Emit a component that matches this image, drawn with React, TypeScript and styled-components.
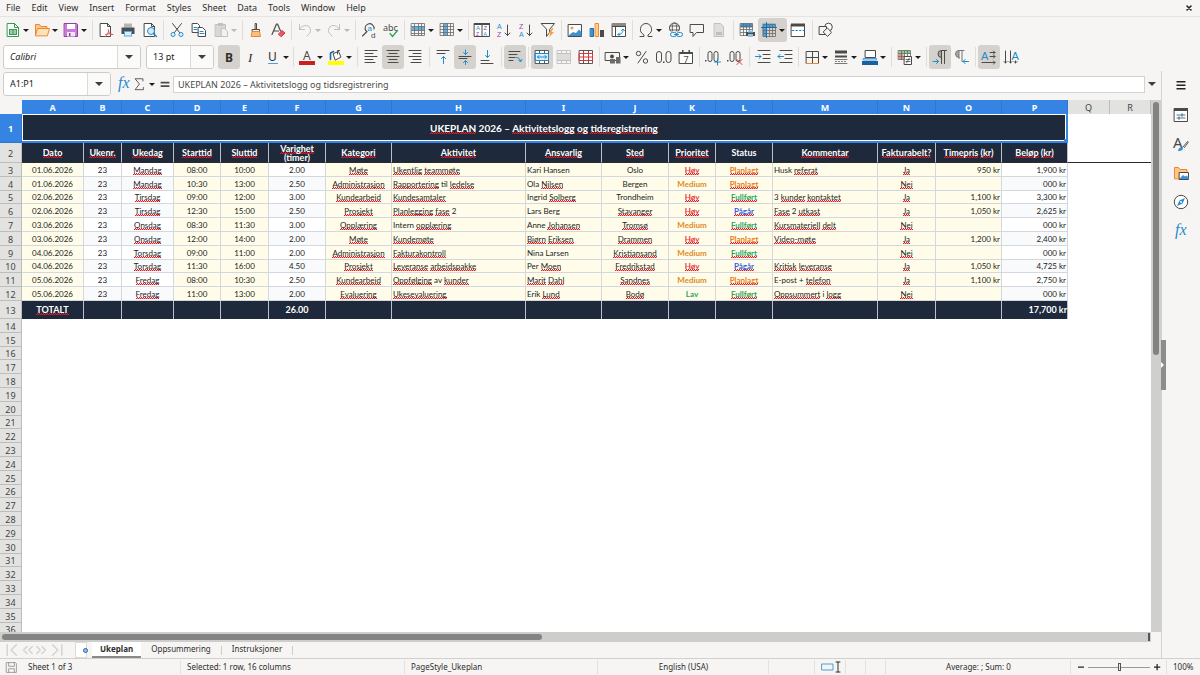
import React, { useEffect, useState } from "react";
import styled, { createGlobalStyle, css } from "styled-components";

const Global = createGlobalStyle`
  *, *::before, *::after { box-sizing: border-box; }
  html, body { margin: 0; height: 100%; overflow: hidden; }
  #root { height: 100%; }
  button, input { font: inherit; color: inherit; margin: 0; padding: 0; border: 0; background: none; }
`;

const ink = "#4a4a48";
const blue = "#1e8bcd";
const soft = "#c0c0be";
const navy = "#1e293b";
const accent = "#3584e4";

/* ---------- icons ---------- */

const grid = (x: number, y: number, w: number, h: number, c: number, r: number) => {
  let d = `M${x} ${y}h${w}v${h}h${-w}z`;
  for (let i = 1; i < c; i++) d += `M${x + (w * i) / c} ${y}v${h}`;
  for (let i = 1; i < r; i++) d += `M${x} ${y + (h * i) / r}h${w}`;
  return d;
};

const S = (d: string, c = ink, w = 1, fill = "none") => (
  <path d={d} stroke={c} strokeWidth={w} fill={fill} strokeLinecap="round" strokeLinejoin="round" />
);
const F = (d: string, c = ink) => <path d={d} fill={c} />;
const T = (x: number, y: number, t: string, size = 8, c = ink, extra: React.SVGProps<SVGTextElement> = {}) => (
  <text x={x} y={y} fontSize={size} fill={c} fontFamily='"Noto Sans", sans-serif' {...extra}>{t}</text>
);
const arial = { fontFamily: '"Liberation Sans", sans-serif' };

const icons: Record<string, React.ReactNode> = {
  new: <>{S("M2.5 1.5h7l4 4v9h-11z", "#2f9e4f", 1, "#fff")}{F("M4 7h8v6H4z", "#3a9a55")}{F("M5 8.500h2.500v1H5zM8.500 8.500H11v1H8.500zM5 10.500h2.500v1H5zM8.500 10.500H11v1H8.500z", "#fff")}{S("M9.500 1.500v4h4", "#2f9e4f")}</>,
  open: <>{S("M1.500 13.500v-11h4l1.500 2h6v2", "#ed8733", 1, "#fbc886")}{S("M1.500 13.500l2-7h12l-2 7z", "#ed8733", 1, "#fde2b8")}</>,
  save: <>{S("M1.500 1.500h12l1 1v12h-13z", "#8f3f9c", 1, "#c77fd4")}{F("M4 2h8v5H4z", "#fff")}{F("M4 10h8v4.500H4z", "#f3e6f6")}{F("M6 11h1.500v3H6z", "#8f3f9c")}</>,
  pdf: <>{S("M2.500 1.500h7l3 3v10h-10z", ink, 1, "#fff")}{S("M9.500 1.500v3h3")}{S("M7.500 14.500c2-2 3-4 3-6.500M10.500 8c0 3 2 5 4.500 4.500M7.500 12.500c2.500-1 5-1 7 0", "#e0555a")}</>,
  print: <>{F("M4 1.500h8v4H4z", "#b6b6b4")}{F("M1.500 5.500h13v6.500h-13z", "#4d4d4b")}{F("M4 9h8v5.500H4z", "#55a8de")}{F("M5 10h6v3.500H5z", "#dceefa")}</>,
  preview: <>{S("M2.500 1.500h7l3 3v10h-10z", ink, 1, "#fff")}{S("M9.500 1.500v3h3")}<circle cx="9" cy="9" r="3.500" fill="#d5eaf8" stroke={blue} />{S("M11.500 11.500l3 3", blue, 1.5)}</>,
  cut: <>{S("M3.500 1.500l7 9M12.500 1.500l-7 9")}<circle cx="4" cy="12.500" r="2" fill="none" stroke={blue} /><circle cx="12" cy="12.500" r="2" fill="none" stroke={blue} /></>,
  copy: <>{S("M1.500 1.500h5l2 2v7h-7z", ink, 1, "#fff")}{S("M7.500 5.500h4l3 3v6h-7z", ink, 1, "#fff")}{S("M9 9.500h3M9 11.500h4M3 5.500h3M3 7.500h3", blue)}</>,
  paste: <>{S("M2.500 2.500h10v12h-10z", soft, 1, "#d8d8d6")}{F("M5 1h5v3H5z", soft)}{S("M8.500 6.500h3l3 3v5h-6z", soft, 1, "#f2f2f0")}</>,
  clone: <>{S("M7.500 1.500h1v6h-1z")}{S("M4.500 7.500h7v2h-7z")}{S("M4.500 9.500h7l1 5h-9z", "#ed8733", 1, "#f9bf7c")}</>,
  clear: <>{S("M2 12.500L6.500 2h1l3 7M3.500 9h5", ink, 1.2)}{S("M8.500 12l3.500-3.500 3 2.500-3.500 3.500z", "#d9363b", 1, "#e8585c")}</>,
  undo: S("M2.500 2.500v5h5M2.500 7.500c3-6 11-5 11 1 0 2-1 3.500-3.500 5.500", soft),
  redo: S("M13.500 2.500v5h-5M13.500 7.500c-3-6-11-5-11 1 0 2 1 3.500 3.500 5.500", soft),
  find: <>{S("M6 9.500L1.500 14M5.500 9.500a4.500 4.500 0 1 1 7.500-2.500", ink, 1.1)}{T(6.5, 9, "a", 8, blue, arial)}{T(10, 15.5, "d", 8, ink, arial)}</>,
  spell: <>{T(0, 8.5, "abc", 9)}{S("M7 11.500l2.500 3 5-6", "#2fa45a", 1.3)}</>,
  rows: <>{F("M1.500 4.500h13v4h-13z", "#5fb0e4")}{S("M1.500 1.500h13v12h-13zM1.500 4.500h13M1.500 8.500h13M1.500 11.500h13M4.500 1.500v12M8.500 1.500v12M11.500 1.500v12", "#6a6a68", 0.8)}</>,
  cols: <>{F("M4.500 1.500h4v12h-4z", "#5fb0e4")}{S("M1.500 1.500h13v12h-13zM1.500 4.500h13M1.500 7.500h13M1.500 10.500h13M4.500 1.500v12M8.500 1.500v12M11.500 1.500v12", "#6a6a68", 0.8)}</>,
  sort: <>{S("M.500 1.500h15v13H.500zM8 1.500v13", ink, 1, "#fff")}{F("M0 1h16v2H0z")}{T(2, 8.2, "A", 6, blue, arial)}{T(2, 14, "Z", 5, "#a33bb5", arial)}{T(9.5, 8.200, "Z", 6, "#a33bb5", arial)}{T(9.5, 14, "A", 5, blue, arial)}</>,
  asc: <>{T(1, 6.5, "A", 7, blue, arial)}{T(1, 15, "Z", 7, "#a33bb5", arial)}{S("M11.500 3v10.500M9 11l2.500 2.500 2.500-2.500")}</>,
  desc: <>{T(1, 6.5, "Z", 7, "#a33bb5", arial)}{T(1, 15, "A", 7, blue, arial)}{S("M11.500 3v10.500M9 11l2.500 2.500 2.500-2.500")}</>,
  filter: <>{S("M1.500 1.500h13l-5 6v3l-3 4v-7z")}{F("M12 6l-4 5.500h2.500L9 15.500l5-5.500h-2.500l2-4z", "#f0a043")}</>,
  image: <>{S("M1.500 2.500h13v12h-13z", ink, 1, "#fff")}<circle cx="5" cy="6" r="1.500" fill="#f0a043" />{F("M2 13l4-3 3 1 3-3.500 2.500 2.500v4H2z", "#3c93cf")}</>,
  chart: <>{S("M1.500 6.500h3v8h-3z", "#1b6ea5", 1, "#3c93cf")}{S("M6.500 1.500h3v13h-3z", "#ed8733", 1, "#fbd49a")}{F("M11 8h4v7h-4z")}</>,
  pivot: <>{S("M1.500 1.500h13v13h-13zM1.500 4.500h13M4.500 1.500v13", ink, 1, "#fff")}{F("M1 1h14v3H1z", "#8a8a88")}{S("M7 12.500c3.500 0 5-1.500 5-5M10.500 8.500L12 7l1.500 1.500M8.500 11L7 12.500 8.500 14", blue)}</>,
  omega: S("M2 14.500h4v-1.500C3 11 2 9 2.500 6.500 3 3.500 5 1.500 8 1.500s5 2 5.500 5C14 9 13 11 10 13v1.500h4"),
  link: <><circle cx="7.500" cy="6" r="5" fill="none" stroke={ink} /><ellipse cx="7.500" cy="6" rx="2.200" ry="5" fill="none" stroke={ink} strokeWidth=".8" />{S("M3 4h9M3 8h9", ink, 0.8)}{F("M3 9.500h13v6H3z", "#f6f5f4")}<rect x="3.500" y="10.500" width="6" height="4" rx="2" fill="none" stroke={blue} /><rect x="9.500" y="10.500" width="6" height="4" rx="2" fill="none" stroke={blue} />{S("M7.500 12.500h4", blue)}</>,
  comment: S("M1.500 2.500h13v8h-7l-3.500 4v-4h-2.500z"),
  header: <>{S("M3.500 1.500h6l3 3v10h-9z", soft, 1, "#dededc")}{F("M5 10h6v3H5z", soft)}</>,
  area: <>{F("M1.500 1.500h12v4h-12z", "#3c93cf")}{S(grid(1.5, 1.500, 12, 12, 4, 4), "#6a6a68", 0.8)}{F("M7 10h9v4H7z", "#4d4d4b")}{F("M9 8.500h5v2H9zM9 12h5v3H9z", "#8fc3e6")}</>,
  freeze: <>{F("M1.500 1.500h13v4h-9v9h-4z", "#4aa0dc")}{S(grid(2.5, 2.500, 12, 12, 4, 4), "#6a6a68", 0.8)}{S("M.500 5.500h15M5.500.500v15", "#1b6ea5")}</>,
  split: <>{S("M1.500 2.500h13v12h-13z", ink, 1, "#fff")}{F("M1 1.500h14v3H1z")}{S("M2 8.500h2M6 8.500h1.500M9.500 8.500h1.500M13 8.500h1", blue)}</>,
  shapes: <><circle cx="10.500" cy="5" r="3.800" fill="#fff" stroke={ink} />{S("M1.500 4.500h7v8h-7z", ink, 1, "#f6f5f4")}{S("M9.500 6l4 4.300-4 4.200-4-4.200z", ink, 1, "#f6f5f4")}</>,
  left: S("M2 1.500h12M2 4.500h8M2 7.500h12M2 10.500h8M2 13.500h10"),
  center: S("M2 1.500h12M4 4.500h8M2 7.500h12M4 10.500h8M3 13.500h10"),
  right: S("M2 1.500h12M6 4.500h8M2 7.500h12M6 10.500h8M4 13.500h10"),
  top: <>{S("M2 1.500h12M2 4.500h8")}{S("M8.500 14.500v-7M6.500 9.500l2-2 2 2", blue)}</>,
  middle: <>{S("M2 7.500h12M2 9.500h8")}{S("M8.500 1v4.500M6.500 3.500l2 2 2-2M8.500 15.500V12M6.500 13.500l2-2 2 2", blue)}</>,
  bottom: <>{S("M2 11.500h8M2 14.500h12")}{S("M8.500 1.500v7M6.500 6.500l2 2 2-2", blue)}</>,
  wrap: <>{S("M2 2.500h11M2 5.500h8M2 8.500h6M2 11.500h4")}{S("M9 8.500c3 0 4 1 4.500 4M11.500 11l2 2 1.500-2.500", blue)}</>,
  mergeC: <>{S("M1.500 1.500h13v13h-13zM5.500 1.500v13M10.500 1.500v13", ink, 0.9, "#fff")}{F("M2 4.500h12v7H2z", "#dceefa")}{S("M1.500 4.500h13v7h-13z", blue)}{S("M3.500 8h9M5 6.500L3.500 8 5 9.500M11 6.500L12.500 8 11 9.500", blue)}</>,
  merge: <>{S("M1.500 1.500h13v13h-13zM5.500 1.500v13M10.500 1.500v13", soft, 0.9)}{F("M2 4.500h12v7H2z", "#dcdcda")}{S("M1.500 4.500h13M1.500 11.500h13", soft)}</>,
  unmerge: <>{S("M1.500 1.500h13v13h-13zM5.500 1.500v13M10.500 1.500v13", ink, 0.9, "#fff")}{S("M1.500 4.500h13v7h-13zM5.500 4.500v7M10.500 4.500v7M1.500 8h13", "#d9363b")}</>,
  currency: <>{S("M.500 3.500h14v8H.500z")}<circle cx="7" cy="7.500" r="2" fill={ink} />{F("M5 10h5v4.500H5zM11 8h4.500v6.500H11z", "#6b6b69")}</>,
  percent: <>{S("M12 2.500L4 14")}<circle cx="4.500" cy="4.500" r="2.200" fill="none" stroke={ink} /><circle cx="11.500" cy="12" r="2.200" fill="none" stroke={ink} /></>,
  number: <><rect x=".5" y="2.500" width="5" height="11" rx="2.500" fill="none" stroke={ink} /><rect x="10" y="2.500" width="5" height="11" rx="2.500" fill="none" stroke={ink} />{F("M7 12.500h1.500v1.500H7z")}</>,
  date: <>{S("M1.500 3.500h13v11h-13z", ink, 1, "#fff")}{F("M1.500 3h13v2h-13zM4 1h1.500v2H4zM10.500 1H12v2h-1.500z")}{T(5.5, 13.5, "7", 9)}</>,
  decAdd: <>{F("M0 11h1.500v1.500H0z")}<rect x="3" y="2.500" width="4" height="10" rx="2" fill="none" stroke={ink} /><rect x="9" y="2.500" width="4" height="10" rx="2" fill="none" stroke={ink} />{S("M12.500 10v6M9.500 13h6", blue)}</>,
  decDel: <>{F("M0 11h1.500v1.500H0z")}<rect x="3" y="2.500" width="4" height="10" rx="2" fill="none" stroke={ink} /><rect x="9" y="2.500" width="4" height="10" rx="2" fill="none" stroke={ink} />{S("M10 10.500l5 5M15 10.500l-5 5", "#d9363b")}</>,
  indent: <>{S("M3 1.500h12M8 5.500h7M8 9.500h7M3 13.500h12")}{S("M.500 7.500H6M4 5.500l2 2-2 2", blue)}</>,
  outdent: <>{S("M3 1.500h12M8 5.500h7M8 9.500h7M3 13.500h12")}{S("M6.500 7.500H1M3 5.500l-2 2 2 2", blue)}</>,
  border: <>{S("M2.500 2.500h12v12h-12zM8.500 2.500v12M2.500 8.500h12")}{S("M2.500 14.500h12", "#ed8733")}</>,
  lines: <>{F("M2 1.500h12v3H2zM2 6.500h12v2H2z")}{S("M2 10.500h12M2.500 12.500h1M5.500 12.500h1M8.500 12.500h1M11.500 12.500h1M2 14.500h12", "#777")}</>,
  bcolor: <>{S("M3.500 1.500h10v7h-10z", ink, 1, "#fff")}{S("M1.500 9.500h13v1.500h-13z", "#4aa0dc")}{F("M0 12h16v4H0z", "#1b5f9e")}</>,
  cond: <>{F("M1.500 1.500h12v3h-12z", "#8ccf8c")}{F("M1.500 5h5v6h-5z", "#ee9090")}{S(grid(1.5, 1.500, 12, 9, 4, 3), "#6a6a68", 0.8)}{S("M7.500 7.500h7v8h-7z", ink, 1, "#fff")}{S("M9 10.500h4M9 12.500h4M12.500 9l-3 5", ink, 0.8)}</>,
  ltr: <>{F("M9.500 1.500a3.500 3.500 0 0 0 0 7z", "#a9a8a5")}{S("M14.500 1.500h-5a3.500 3.500 0 0 0 0 7M9.500 1.500v13M12.500 1.500v13")}{S("M1 12.500h5.500M4.500 10.500l2 2-2 2", blue)}</>,
  rtl: <>{F("M5 1.500a3.500 3.500 0 0 0 0 7z", "#a9a8a5")}{S("M10 1.500H5a3.500 3.500 0 0 0 0 7M5 1.500v8M8 1.500v11", "#777")}{S("M14.500 12.500H9M11 10.500l-2 2 2 2", blue)}</>,
  textH: <>{T(0, 10.5, "A", 11, blue, arial)}{S("M9 3.500h5M9 7.500h5M1 13.500h13M12.500 2L14 3.500 12.500 5M12.500 6L14 7.500 12.500 9M12.500 12l1.500 1.500-1.500 1.500")}</>,
  textV: <>{T(8.5, 10.5, "A", 11, blue, arial)}{S("M2.500 2v12M1 12.500L2.500 14 4 12.500M7.500 2v12M6 12.500L7.500 14 9 12.500M12.500 12v2M11 12.500l1.500 1.500 1.500-1.500")}</>,
  bold: T(4, 12.5, "B", 12, "#2e2e2c", { fontWeight: 700 }),
  italic: T(5, 12.5, "I", 13, "#2e2e2c", { fontStyle: "italic", fontFamily: '"Liberation Serif", serif' }),
  underline: <>{T(3, 11.5, "U", 12, "#2e2e2c")}{S("M3.500 14.500h9", "#4aa0dc")}</>,
  fcolor: <>{T(4, 10.5, "A", 12)}{F("M0 12h16v4H0z", "#c9211e")}</>,
  hilite: <>{F("M0 12h16v4H0z", "#ffff00")}{S("M5.500 4.500l5-2 2.500 5.500-5.500 3z", ink, 1, "#fff")}{S("M2.500 10.500V4l3-1.500", "#1b6ea5", 1.6)}{S("M9.500 5V1.500h2")}</>,
  fx: T(2, 12, "fx", 16, blue, { fontStyle: "italic", fontFamily: '"Liberation Serif", serif' }),
  sigma: S("M12.500 4.500v-2.500h-9l5 6-5 6.500h9.500V12"),
  equal: F("M3 5.500h10v2H3zM3 9.500h10v2H3z"),
  menu: F("M3.500 3h9v1.500h-9zM3.500 6.500h9V8h-9zM3.500 10h9v1.500h-9z", "#222"),
  props: <>{S("M1.500 1.500h13v13h-13z", ink, 1, "#fff")}{F("M1 1h14v3H1z")}{S("M4 8h8M4 11h8", ink, 0.8)}{S("M9 6.800v2.400M6 9.800v2.400", blue, 1.3)}</>,
  styles: <>{T(0, 12, "A", 15)}{S("M14.500 5.500l-4.500 5.500M15.500 6l-4 5.500", ink, 0.9)}{F("M5 15c0-3 3-4.500 5-4 .500 3-2 4.500-5 4z", "#3c93cf")}</>,
  gallery: <>{S("M1.500 13.500v-11h4l1.500 2h7v9z", "#ed8733", 1, "#fbc886")}{S("M6.500 7.500h9v7h-9z", ink, 1, "#fff")}{F("M7 13l3-3 2 1.500 1.500-1 2 2V14H7z", "#3c93cf")}</>,
  navigator: <><circle cx="8" cy="8" r="6.700" fill="#fff" stroke={ink} />{F("M12 4l-2.500 5.500L4 12l2.500-5.500z", blue)}<circle cx="8" cy="8" r="1" fill="#fff" /></>,
  disk: S("M2 2h11l1 1v11H2zM4.500 2v4.500h7V2M4.500 14v-4.500h7V14", "#8d8d8b"),
  minus: F("M2 7h12v2.500H2z", "#222"),
  plus: F("M2 7h5V2h2.500v5h5v2.500h-5v5H7v-5H2z", "#222"),
  first: S("M2.500 2v12M13 2L7 8l6 6", "#d3d1ce", 1.6),
  prev: S("M8 4L4 8l4 4M14 4l-4 4 4 4", "#d3d1ce", 1.6),
  next: S("M2 4l4 4-4 4M8 4l4 4-4 4", "#d3d1ce", 1.6),
  last: S("M3 2l6 6-6 6M13.500 2v12", "#d3d1ce", 1.6),
};

const Svg = styled.svg<{ $s: number }>`
  display: block;
  flex: none;
  overflow: visible;
  width: ${(p) => p.$s}px;
  height: ${(p) => p.$s}px;
`;
const Icon = ({ name, size = 16 }: { name: string; size?: number }) => (
  <Svg $s={size} viewBox="0 0 16 16" aria-hidden="true">{icons[name]}</Svg>
);

/* ---------- shell ---------- */

const Window = styled.div`
  display: flex;
  flex-direction: column;
  height: 100vh;
  background: #f6f5f4;
  color: #3d3d3b;
  font: 9px/12px "Noto Sans", sans-serif;
`;
const MenuBar = styled.nav`
  display: flex;
  flex: none;
  align-items: center;
  gap: 11px;
  height: 17px;
  padding: 0 6px;
  border-bottom: 1px solid #e6e4e2;
`;
const MenuItem = styled.button`
  color: #2e2e2c;
`;
const CloseButton = styled.button`
  margin-left: auto;
  width: 10px;
  height: 12px;
`;

const Toolbar = styled.div`
  display: flex;
  flex: none;
  align-items: center;
  height: 27px;
  padding: 0 0 1px 2px;
`;
const Tool = styled.button<{ $on?: boolean; $split?: boolean; $dim?: boolean }>`
  display: flex;
  flex: none;
  align-items: center;
  gap: 2px;
  width: ${(p) => (p.$split ? 29 : 22)}px;
  height: 24px;
  padding-left: 3px;
  border-radius: 3px;
  background: ${(p) => (p.$on ? "#d5d2ce" : "transparent")};
  color: ${(p) => (p.$dim ? "#b8b8b6" : "#1d1d1b")};
`;
const Caret = styled.span<{ $big?: boolean }>`
  flex: none;
  border: solid transparent;
  border-width: ${(p) => (p.$big ? "4px 4px 0" : "3px 3px 0")};
  border-top-color: currentColor;
`;
const Divider = styled.span<{ $wide?: boolean }>`
  flex: none;
  width: 1px;
  height: 20px;
  margin: 0 2px 0 ${(p) => (p.$wide ? 3 : 2)}px;
  background: #e0deda;
`;

const Combo = styled.div<{ $w: number }>`
  display: flex;
  flex: none;
  width: ${(p) => p.$w}px;
  height: 24px;
  margin: 0 4px 0 1px;
  border: 1px solid #cfccc8;
  border-radius: 3px;
  background: #fff;
  overflow: hidden;
`;
const ComboInput = styled.input<{ $italic?: boolean }>`
  flex: 1;
  min-width: 0;
  padding-left: 6px;
  color: #222;
  font-style: ${(p) => (p.$italic ? "italic" : "normal")};
  outline: none;
`;
const ComboButton = styled.button`
  display: flex;
  align-items: center;
  justify-content: center;
  width: 23px;
  border-left: 1px solid #dcdad6;
  background: #fafaf9;
`;

const Body = styled.div`
  display: flex;
  flex: 1;
  min-height: 0;
`;
const Main = styled.main`
  display: flex;
  flex: 1;
  flex-direction: column;
  min-width: 0;
`;
const FormulaBar = styled.div`
  display: flex;
  flex: none;
  align-items: center;
  height: 29px;
  padding: 0 5px 3px 2px;
`;
const FormulaTool = styled.button<{ $w: number }>`
  display: flex;
  flex: none;
  align-items: center;
  justify-content: center;
  width: ${(p) => p.$w}px;
  height: 20px;
  color: #1d1d1b;
`;
const FormulaInput = styled.input`
  flex: 1;
  min-width: 0;
  height: 17px;
  padding-left: 4px;
  border: 1px solid #d5d3d0;
  background: #fff;
  color: #4a4a48;
  outline: none;
`;
const FormulaExpand = styled.button`
  display: flex;
  flex: none;
  justify-content: flex-end;
  width: 11px;
`;

const SideWrap = styled.div`
  position: relative;
  display: flex;
`;
const Side = styled.aside`
  display: flex;
  flex: none;
  flex-direction: column;
  align-items: center;
  width: 39px;
  border-left: 1px solid #d5d3d0;
`;
const SideButton = styled.button`
  display: flex;
  flex: none;
  align-items: center;
  justify-content: center;
  width: 28px;
  height: 29px;
`;

/* ---------- sheet ---------- */

const SheetArea = styled.div`
  display: flex;
  flex: 1;
  min-height: 0;
`;
const Viewport = styled.div`
  flex: 1;
  min-width: 0;
  overflow: hidden;
  background: #fff;
`;
const Table = styled.table`
  width: 100%;
  border-collapse: separate;
  border-spacing: 0;
  table-layout: fixed;
  color: #1c1c1c;
  font: 8px/12px Lato, sans-serif;
  th, td { padding: 0; white-space: nowrap; }
`;
const Col = styled.col<{ $w?: number }>`
  width: ${(p) => (p.$w ? `${p.$w}px` : "auto")};
`;
const Row = styled.tr<{ $h: number }>`
  height: ${(p) => p.$h}px;
`;
const Corner = styled.td`
  background: #f6f5f4;
`;
const head = css<{ $on?: boolean }>`
  background: ${(p) => (p.$on ? accent : "#e2e2e1")};
  color: ${(p) => (p.$on ? "#fff" : "#444")};
  font: ${(p) => (p.$on ? 700 : 400)} 9px/11px "Noto Sans", sans-serif;
  text-align: center;
  border: solid ${(p) => (p.$on ? "#2f77ce" : "#bdbdbb")};
`;
const ColHead = styled.th<{ $on?: boolean }>`
  ${head}
  border-width: 0 1px 0 0;
`;
const RowHead = styled.th<{ $on?: boolean }>`
  ${head}
  && { padding-top: 1px; }
  border-width: 0 1px 1px 0;
`;
const TitleCell = styled.td`
  position: relative;
  border: solid ${accent};
  border-width: 0 2px 2px 0;
  background: ${navy};
  box-shadow: inset 0 0 0 1px #fff;
  color: #fff;
  font-size: 10px;
  font-weight: 700;
  text-align: center;
`;
const FillHandle = styled.span`
  position: absolute;
  right: -2px;
  bottom: -2px;
  width: 4px;
  height: 4px;
  background: ${accent};
`;
const DarkCell = styled.td<{ $head?: boolean; $align?: string }>`
  border-right: 1px solid #b9c0ca;
  border-bottom: ${(p) => (p.$head ? "1px solid #2b2b2b" : "0")};
  background: ${navy};
  color: #fff;
  font-size: 9px;
  font-weight: 700;
  line-height: ${(p) => (p.$head ? 9 : 14)}px;
  text-align: ${(p) => p.$align || "center"};
`;
const Wrap = styled.div`
  white-space: normal;
`;
const FreezeCell = styled.td`
  border-bottom: 1px solid #2b2b2b;
`;
const DataCell = styled.td<{ $bg: string; $align: string; $tone?: string }>`
  && { padding: 0 1px; }
  border: solid #d3d7de;
  border-width: 0 1px 1px 0;
  background: ${(p) => p.$bg};
  color: ${(p) => p.$tone || "inherit"};
  font-weight: ${(p) => (p.$tone ? 700 : 400)};
  text-align: ${(p) => p.$align};
`;
const Wavy = styled.span`
  background:
    repeating-linear-gradient(90deg, #e01b24 0 1px, #e01b2466 1px 2px) 0 100% / 100% 1px no-repeat,
    repeating-linear-gradient(90deg, transparent 0 1px, #e01b24 1px 2px) 0 calc(100% - 1px) / 100% 1px no-repeat;
`;

const VScroll = styled.div`
  flex: none;
  width: 10px;
  padding: 2px;
  background: #cfcfce;
`;
const VThumb = styled.div`
  width: 6px;
  height: 48%;
  border-radius: 3px;
  background: #828382;
`;
const HScroll = styled.div`
  display: flex;
  flex: none;
  justify-content: space-between;
  align-items: center;
  height: 10px;
  margin-right: 10px;
  padding: 0 1px 0 2px;
  background: #cdcdcc;
`;
const HThumb = styled.div`
  width: 47%;
  height: 6px;
  border-radius: 3px;
  background: #828382;
`;
const HGrip = styled.div`
  width: 2px;
  height: 8px;
  background: #555;
`;
const SideHandle = styled.button`
  position: absolute;
  display: flex;
  align-items: center;
  left: 0;
  top: 50%;
  width: 5px;
  height: 50px;
  margin-top: -25px;
  background: #8d8d8c;
`;
const HandleMark = styled.span`
  border: solid transparent;
  border-width: 3px 0 3px 3px;
  border-left-color: #fff;
`;

const Tabs = styled.div`
  display: flex;
  flex: none;
  align-items: stretch;
  height: 16px;
  padding-left: 5px;
  font-size: 8px;
`;
const TabNav = styled.div`
  display: flex;
  align-items: center;
  gap: 1px;
  width: 70px;
`;
const TabNavButton = styled.button`
  width: 14px;
  height: 14px;
`;
const AddSheet = styled.button`
  position: relative;
  width: 12px;
  margin-right: 5px;
  border: 1px solid #dddbd8;
  background: #fff;
`;
const Plus = styled.span`
  position: absolute;
  right: -2px;
  top: 5px;
  width: 5px;
  height: 5px;
  border: 1px solid #2a62b5;
  border-radius: 3px;
  background: #9dbde8;
`;
const Tab = styled.button<{ $on?: boolean }>`
  padding: 0 ${(p) => (p.$on ? 8 : 10)}px;
  border-bottom: 2px solid ${(p) => (p.$on ? "#8a8a89" : "transparent")};
  background: ${(p) => (p.$on ? "#fff" : "transparent")};
  color: #2e2e2c;
  font-weight: ${(p) => (p.$on ? 700 : 400)};
`;
const TabLine = styled.span`
  align-self: center;
  width: 1px;
  height: 9px;
  background: #cfcdca;
`;

const StatusBar = styled.footer`
  display: grid;
  flex: none;
  grid-template-columns: 22px 159fr 224fr 193fr 171fr 46px 31px 20px 20px 185fr 96px 33px;
  grid-template-rows: 14px;
  height: 17px;
  padding-top: 1px;
  border-top: 1px solid #d2d0cd;
  color: #2e2e2c;
  font-size: 8px;
`;
const StatusCell = styled.div<{ $mid?: boolean }>`
  display: flex;
  align-items: center;
  justify-content: ${(p) => (p.$mid ? "center" : "flex-start")};
  gap: 3px;
  min-width: 0;
  padding: 0 5px 0 6px;
  border-right: 1px solid #e4e2df;
  white-space: nowrap;
  &:first-child { border-right: 0; padding: 0 0 0 5px; }
  &:last-child { border-right: 0; }
`;
const ZoomButton = styled.button`
  flex: none;
  width: 8px;
  height: 8px;
`;
const ZoomRange = styled.input`
  flex: 1;
  min-width: 0;
  height: 10px;
  appearance: none;
  background: linear-gradient(#999, #999) 0 50% / 100% 1px no-repeat;
  &::-webkit-slider-thumb {
    appearance: none;
    width: 3px;
    height: 8px;
    border: 1px solid #555;
    background: #eee;
  }
`;

/* ---------- data ---------- */

type Item = string | [string, string, ("on" | "split" | "dim")?, ("split" | "dim")?];

const standard: Item[] = [
  ["new", "New", "split"], ["open", "Open", "split"], ["save", "Save", "split"], "||",
  ["pdf", "Export as PDF"], ["print", "Print"], ["preview", "Print preview"], "|",
  ["cut", "Cut"], ["copy", "Copy"], ["paste", "Paste", "dim", "split"], "||",
  ["clone", "Clone formatting"], ["clear", "Clear formatting"], "|",
  ["undo", "Undo", "dim", "split"], ["redo", "Redo", "dim", "split"], "||",
  ["find", "Find and replace"], ["spell", "Spelling"], "|",
  ["rows", "Row", "split"], ["cols", "Column", "split"], "||",
  ["sort", "Sort"], ["asc", "Sort ascending"], ["desc", "Sort descending"], ["filter", "AutoFilter"], "|",
  ["image", "Insert image"], ["chart", "Insert chart"], ["pivot", "Pivot table"], "|",
  ["omega", "Special character", "split"], ["link", "Hyperlink"], ["comment", "Comment"], ["header", "Headers and footers", "dim"], "||",
  ["area", "Print area"], ["freeze", "Freeze rows and columns", "on", "split"], ["split", "Split window"], "||",
  ["shapes", "Draw functions"],
];
const formatting: Item[] = [
  ["bold", "Bold", "on"], ["italic", "Italic"], ["underline", "Underline", "split"], "|",
  ["fcolor", "Font colour", "split"], ["hilite", "Highlighting", "split"], "||",
  ["left", "Align left"], ["center", "Align centre", "on"], ["right", "Align right"], "||",
  ["top", "Align top"], ["middle", "Centre vertically", "on"], ["bottom", "Align bottom"], "||",
  ["wrap", "Wrap text", "on"], "|",
  ["mergeC", "Merge and centre", "on"], ["merge", "Merge cells", "dim"], ["unmerge", "Unmerge cells"], "|",
  ["currency", "Currency", "split"], ["percent", "Percent"], ["number", "Number"], ["date", "Date"], "|",
  ["decAdd", "Add decimal place"], ["decDel", "Delete decimal place"], "||",
  ["indent", "Increase indent"], ["outdent", "Decrease indent"], "|",
  ["border", "Borders", "split"], ["lines", "Border style", "split"], ["bcolor", "Border colour", "split"], "||",
  ["cond", "Conditional formatting", "split"], "||",
  ["ltr", "Left to right", "on"], ["rtl", "Right to left"], "|",
  ["textH", "Text direction left to right", "on"], ["textV", "Text direction top to bottom"],
];

const letters = "ABCDEFGHIJKLMNOPQR".split("");
const widths = [62, 38, 52, 47, 48, 57, 66, 134, 76, 67, 47, 57, 105, 58, 66, 66, 42, 41];
const fields = ["Dato", "Ukenr.", "Ukedag", "Starttid", "Sluttid", "Varighet (timer)", "Kategori", "Aktivitet", "Ansvarlig", "Sted", "Prioritet", "Status", "Kommentar", "Fakturabelt?", "Timepris (kr)", "Beløp (kr)"];
const records = [
  "01.06.2026|23|Mandag|08:00|10:00|2.00|Møte|Ukentlig teammøte|Kari Hansen|Oslo|Høy|Planlagt|Husk referat|Ja|950 kr|1,900 kr",
  "01.06.2026|23|Mandag|10:30|13:00|2.50|Administrasjon|Rapportering til ledelse|Ola Nilsen|Bergen|Medium|Planlagt||Nei||000 kr",
  "02.06.2026|23|Tirsdag|09:00|12:00|3.00|Kundearbeid|Kundesamtaler|Ingrid Solberg|Trondheim|Høy|Fullført|3 kunder kontaktet|Ja|1,100 kr|3,300 kr",
  "02.06.2026|23|Tirsdag|12:30|15:00|2.50|Prosjekt|Planlegging fase 2|Lars Berg|Stavanger|Høy|Pågår|Fase 2 utkast|Ja|1,050 kr|2,625 kr",
  "03.06.2026|23|Onsdag|08:30|11:30|3.00|Opplæring|Intern opplæring|Anne Johansen|Tromsø|Medium|Fullført|Kursmateriell delt|Nei||000 kr",
  "03.06.2026|23|Onsdag|12:00|14:00|2.00|Møte|Kundemøte|Bjørn Eriksen|Drammen|Høy|Planlagt|Video-møte|Ja|1,200 kr|2,400 kr",
  "04.06.2026|23|Torsdag|09:00|11:00|2.00|Administrasjon|Fakturakontroll|Nina Larsen|Kristiansand|Medium|Fullført||Nei||000 kr",
  "04.06.2026|23|Torsdag|11:30|16:00|4.50|Prosjekt|Leveranse arbeidspakke|Per Moen|Fredrikstad|Høy|Pågår|Kritisk leveranse|Ja|1,050 kr|4,725 kr",
  "05.06.2026|23|Fredag|08:00|10:30|2.50|Kundearbeid|Oppfølging av kunder|Marit Dahl|Sandnes|Medium|Planlagt|E-post + telefon|Ja|1,100 kr|2,750 kr",
  "05.06.2026|23|Fredag|11:00|13:00|2.00|Evaluering|Ukesevaluering|Erik Lund|Bodø|Lav|Fullført|Oppsummert i logg|Nei||000 kr",
].map((r) => r.split("|"));

const tones: Record<string, string> = {
  Høy: "#e5383b", Medium: "#e08a1e", Lav: "#2aa45c", Planlagt: "#e67e22", Fullført: "#2aa45c", Pågår: "#2f5fe8",
};
const known = new Set("til Kari Hansen Ola Ingrid Lars Berg Intern Anne Nina Larsen Per Erik Oslo Bergen Trondheim Medium Lav Status Husk E-post av i (timer)".split(" "));

const Spelled = ({ text }: { text: string }) => (
  <>
    {text.split(" ").map((word, i) => (
      <React.Fragment key={i}>
        {i > 0 && " "}
        {known.has(word) || !/[A-Za-z]/.test(word) ? word : <Wavy>{word}</Wavy>}
      </React.Fragment>
    ))}
  </>
);

const alignOf = (c: number) => (c === 7 || c === 8 || c === 12 ? "left" : c > 13 ? "right" : "center");
const plain = new Set([1, 2, 5, 15]);
const rowHeight = (n: number) => (n % 5 === 2 ? 13 : 14);

/* empty rows that fit between the totals row and the bottom bars */
const countEmptyRows = () => Math.max(0, Math.ceil(((window.innerHeight - 362) * 5) / 69));

function useEmptyRows() {
  const [count, setCount] = useState(countEmptyRows);
  useEffect(() => {
    const update = () => setCount(countEmptyRows());
    window.addEventListener("resize", update);
    return () => window.removeEventListener("resize", update);
  }, []);
  return count;
}

const Tools = ({ items }: { items: Item[] }) => (
  <>
    {items.map((it, i) => {
      if (typeof it === "string") return <Divider key={i} $wide={it === "||"} />;
      const flags = it.slice(2);
      const split = flags.includes("split");
      return (
        <Tool key={i} aria-label={it[1]} $on={flags.includes("on")} $split={split} $dim={flags.includes("dim")}>
          <Icon name={it[0]} />
          {split && <Caret />}
        </Tool>
      );
    })}
  </>
);

const Sheet = () => {
  const emptyRows = useEmptyRows();
  return (
    <Table>
      <colgroup>
        <Col $w={22} />
        {widths.map((w, i) => <Col key={i} $w={w} />)}
        <Col />
      </colgroup>
      <thead>
        <Row $h={14}>
          <Corner />
          {letters.map((l, i) => <ColHead key={l} scope="col" $on={i < 16}>{l}</ColHead>)}
          <ColHead aria-hidden="true" />
        </Row>
      </thead>
      <tbody>
        <Row $h={29}>
          <RowHead scope="row" $on>1</RowHead>
          <TitleCell colSpan={16}>
            <Spelled text="UKEPLAN 2026 – Aktivitetslogg og tidsregistrering" />
            <FillHandle />
          </TitleCell>
          <td colSpan={3} />
        </Row>
        <Row $h={20}>
          <RowHead scope="row">2</RowHead>
          {fields.map((f) => (
            <DarkCell key={f} $head><Wrap><Spelled text={f} /></Wrap></DarkCell>
          ))}
          <FreezeCell colSpan={3} />
        </Row>
        {records.map((rec, r) => (
          <Row key={r} $h={rowHeight(r)}>
            <RowHead scope="row">{r + 3}</RowHead>
            {rec.map((v, c) => (
              <DataCell
                key={c}
                $align={alignOf(c)}
                $bg={plain.has(c) ? (r % 2 ? "#f8fafc" : "#fff") : "#fffdea"}
                $tone={c === 10 || c === 11 ? tones[v] : undefined}
              >
                {c > 13 ? v : <Spelled text={v} />}
              </DataCell>
            ))}
            <td colSpan={3} />
          </Row>
        ))}
        <Row $h={18}>
          <RowHead scope="row">13</RowHead>
          {fields.map((f, c) => (
            <DarkCell key={f} $align={c === 15 ? "right" : "center"}>
              {c === 0 ? <Wavy>TOTALT</Wavy> : c === 5 ? "26.00" : c === 15 ? "17,700 kr" : ""}
            </DarkCell>
          ))}
          <td colSpan={3} />
        </Row>
        {Array.from({ length: emptyRows }, (_, i) => (
          <Row key={i} $h={rowHeight(i)}>
            <RowHead scope="row">{i + 14}</RowHead>
            <td colSpan={19} />
          </Row>
        ))}
      </tbody>
    </Table>
  );
};

export default function App() {
  const [formula, setFormula] = useState("UKEPLAN 2026 – Aktivitetslogg og tidsregistrering");
  const [zoom, setZoom] = useState("50");
  return (
    <Window>
      <Global />
      <MenuBar>
        {["File", "Edit", "View", "Insert", "Format", "Styles", "Sheet", "Data", "Tools", "Window", "Help"].map((m) => (
          <MenuItem key={m}>{m}</MenuItem>
        ))}
        <CloseButton aria-label="Close document">
          <Svg $s={10} viewBox="0 0 10 10">{S("M3 3l4 4M7 3l-4 4", "#222", 1.6)}</Svg>
        </CloseButton>
      </MenuBar>
      <Toolbar><Tools items={standard} /></Toolbar>
      <Toolbar>
        <Combo $w={138}>
          <ComboInput aria-label="Font name" defaultValue="Calibri" $italic />
          <ComboButton aria-label="Choose font"><Caret $big /></ComboButton>
        </Combo>
        <Combo $w={68}>
          <ComboInput aria-label="Font size" defaultValue="13 pt" />
          <ComboButton aria-label="Choose size"><Caret $big /></ComboButton>
        </Combo>
        <Tools items={formatting} />
      </Toolbar>
      <Body>
        <Main>
          <FormulaBar>
            <Combo $w={108}>
              <ComboInput aria-label="Name box" defaultValue="A1:P1" />
              <ComboButton aria-label="Choose range"><Caret $big /></ComboButton>
            </Combo>
            <FormulaTool $w={17} aria-label="Function wizard"><Icon name="fx" /></FormulaTool>
            <FormulaTool $w={14} aria-label="Select function"><Icon name="sigma" size={14} /></FormulaTool>
            <FormulaTool $w={11} aria-label="More functions"><Caret /></FormulaTool>
            <FormulaTool $w={16} aria-label="Formula"><Icon name="equal" size={14} /></FormulaTool>
            <FormulaInput aria-label="Input line" value={formula} onChange={(e) => setFormula(e.target.value)} />
            <FormulaExpand aria-label="Expand formula bar"><Caret $big /></FormulaExpand>
          </FormulaBar>
          <SheetArea>
            <Viewport><Sheet /></Viewport>
            <VScroll><VThumb /></VScroll>
          </SheetArea>
          <HScroll><HThumb /><HGrip /></HScroll>
          <Tabs>
            <TabNav>
              {["first", "prev", "next", "last"].map((d) => (
                <TabNavButton key={d} aria-label={`${d} sheet`}><Icon name={d} size={14} /></TabNavButton>
              ))}
            </TabNav>
            <AddSheet aria-label="Add sheet"><Plus /></AddSheet>
            <Tab $on>Ukeplan</Tab>
            <Tab>Oppsummering</Tab>
            <TabLine />
            <Tab>Instruksjoner</Tab>
            <TabLine />
          </Tabs>
        </Main>
        <SideWrap>
          <Side>
            <SideButton aria-label="Sidebar settings"><Icon name="menu" /></SideButton>
            <SideButton aria-label="Properties"><Icon name="props" /></SideButton>
            <SideButton aria-label="Styles"><Icon name="styles" /></SideButton>
            <SideButton aria-label="Gallery"><Icon name="gallery" /></SideButton>
            <SideButton aria-label="Navigator"><Icon name="navigator" /></SideButton>
            <SideButton aria-label="Functions"><Icon name="fx" /></SideButton>
          </Side>
          <SideHandle aria-label="Hide sidebar"><HandleMark /></SideHandle>
        </SideWrap>
      </Body>
      <StatusBar>
        <StatusCell><Icon name="disk" size={13} /></StatusCell>
        <StatusCell>Sheet 1 of 3</StatusCell>
        <StatusCell>Selected: 1 row, 16 columns</StatusCell>
        <StatusCell>PageStyle_Ukeplan</StatusCell>
        <StatusCell $mid>English (USA)</StatusCell>
        <StatusCell />
        <StatusCell>
          <Svg $s={20} viewBox="0 0 20 16">{S("M1 5h11v6H1z", "#4a9fd6")}{S("M15 3h4M17 3v10M15 13h4", "#333")}</Svg>
        </StatusCell>
        <StatusCell />
        <StatusCell />
        <StatusCell $mid>Average: ; Sum: 0</StatusCell>
        <StatusCell>
          <ZoomButton aria-label="Zoom out"><Icon name="minus" size={8} /></ZoomButton>
          <ZoomRange type="range" aria-label="Zoom" value={zoom} onChange={(e) => setZoom(e.target.value)} />
          <ZoomButton aria-label="Zoom in"><Icon name="plus" size={8} /></ZoomButton>
        </StatusCell>
        <StatusCell>100%</StatusCell>
      </StatusBar>
    </Window>
  );
}
